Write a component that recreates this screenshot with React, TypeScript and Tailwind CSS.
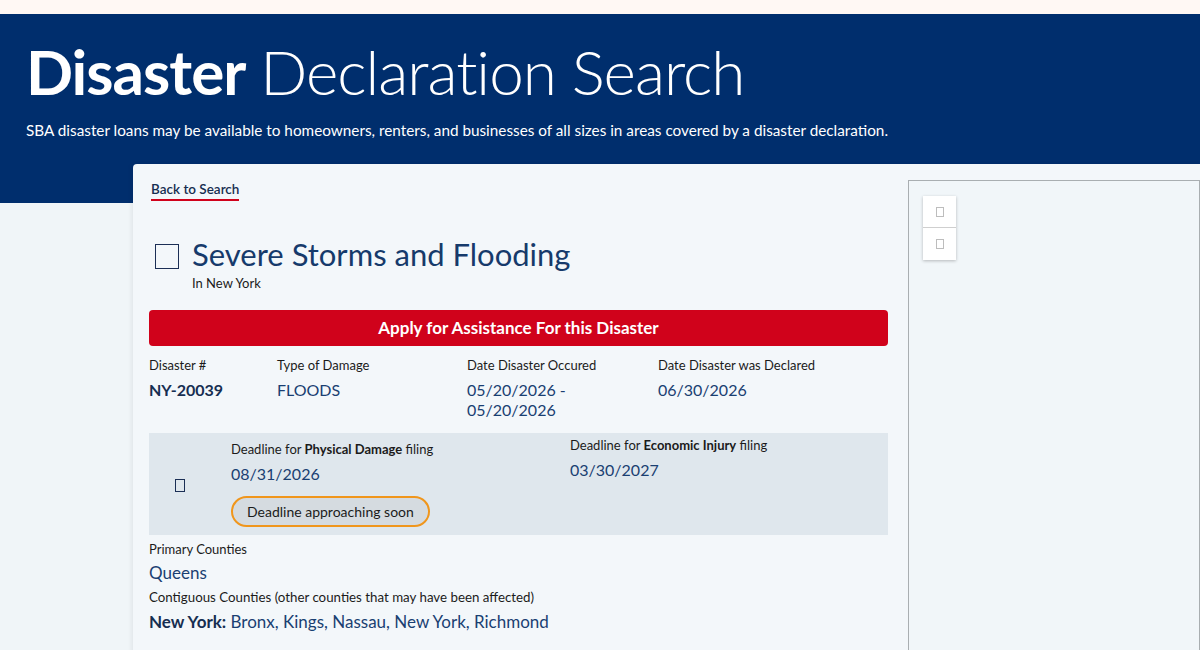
import React from 'react';

const font = { fontFamily: 'Lato, "Noto Sans", sans-serif' };

function Glyph({ className }: { className: string }) {
  // empty box where the icon font glyph would be
  return <span className={`inline-block ${className}`} />;
}

function DetailItem({ label, value, bold }: { label: string; value: React.ReactNode; bold?: boolean }) {
  return (
    <div className="flex flex-col">
      <span className="text-[13px] leading-[18px] text-[#1b1b1b]">{label}</span>
      <span className={`mt-[6px] text-[16px] leading-[20px] text-[#1a3f72] ${bold ? 'font-bold text-[#162e51]' : ''}`}>
        {value}
      </span>
    </div>
  );
}

export default function App() {
  return (
    <div className="min-h-screen w-[1200px] overflow-hidden bg-[#f0f5f8]" style={font}>
      {/* Site banner strip */}
      <div className="h-[14px] bg-[#fff8f4]" />

      {/* Page hero */}
      <div className="h-[189px] bg-[#002e6d] px-[26px] pt-[22px] text-white">
        <h1 className="text-[62px] leading-[70px] tracking-[-1px]">
          <span className="font-bold">Disaster</span> <span className="font-light">Declaration Search</span>
        </h1>
        <p className="mt-[14px] text-[15.3px] leading-[20px]">
          SBA disaster loans may be available to homeowners, renters, and businesses of all sizes in areas covered by a disaster declaration.
        </p>
      </div>

      {/* Detail card */}
      <div className="-mt-[39px] ml-[133px] flex h-[520px] gap-[20px] rounded-tl-[4px] bg-[#f3f7fa] pl-[16px] pt-[12px] shadow-[-2px_0_4px_rgba(0,0,0,0.06)]">
        <div className="flex w-[739px] shrink-0 flex-col">
          <div>
            <a className="ml-[2px] inline-block border-b-2 border-[#d0021b] pb-px text-[13.5px] font-semibold leading-[17px] text-[#162e51]">
              Back to Search
            </a>
          </div>

          <div className="mt-[35px] flex items-start gap-[13px] pl-[6px]">
            <Glyph className="mt-[8px] h-[25px] w-[24px] border-[1.5px] border-[#1b2f55]" />
            <div className="flex flex-col">
              <h2 className="text-[31px] leading-[36px] text-[#163a6b]">Severe Storms and Flooding</h2>
              <span className="mt-[3px] text-[13px] leading-[16px] text-[#1b1b1b]">In New York</span>
            </div>
          </div>

          <button className="mt-[19px] h-[36px] w-full rounded-[4px] bg-[#d0021b] text-[17px] font-bold text-white">
            Apply for Assistance For this Disaster
          </button>

          <div className="mt-[10px] grid grid-cols-[128px_190px_191px_1fr]">
            <DetailItem label="Disaster #" value="NY-20039" bold />
            <DetailItem label="Type of Damage" value="FLOODS" />
            <DetailItem
              label="Date Disaster Occured"
              value={
                <>
                  05/20/2026 -<br />
                  05/20/2026
                </>
              }
            />
            <DetailItem label="Date Disaster was Declared" value="06/30/2026" />
          </div>

          {/* Filing deadlines */}
          <div className="mt-[13px] flex h-[102px] bg-[#dfe7ed]">
            <div className="flex w-[82px] items-center pl-[26px]">
              <Glyph className="mt-[2px] h-[13px] w-[10px] border border-[#1b2f55]" />
            </div>
            <div className="w-[339px] pt-[7px]">
              <div className="text-[13px] leading-[18px] text-[#1b1b1b]">
                Deadline for <b className="font-bold">Physical Damage</b> filing
              </div>
              <div className="mt-[6px] text-[16px] leading-[20px] text-[#1a3f72]">08/31/2026</div>
              <div className="mt-[12px] inline-flex h-[31px] items-center rounded-full border-2 border-[#f0961c] bg-[#d5dbe0] px-[14px] text-[14px] text-[#1b1b1b]">
                Deadline approaching soon
              </div>
            </div>
            <div className="pt-[3px]">
              <div className="text-[13px] leading-[18px] text-[#1b1b1b]">
                Deadline for <b className="font-bold">Economic Injury</b> filing
              </div>
              <div className="mt-[6px] text-[16px] leading-[20px] text-[#1a3f72]">03/30/2027</div>
            </div>
          </div>

          <div className="mt-[5px] text-[13px] leading-[18px] text-[#1b1b1b]">Primary Counties</div>
          <div className="mt-[4px] text-[17px] leading-[22px] text-[#1a3f72]">Queens</div>
          <div className="mt-[4px] text-[13.3px] leading-[18px] text-[#1b1b1b]">
            Contiguous Counties (other counties that may have been affected)
          </div>
          <div className="mt-[5px] text-[17px] leading-[22px] text-[#1a3f72]">
            <b className="font-bold text-[#162e51]">New York:</b> Bronx, Kings, Nassau, New York, Richmond
          </div>
        </div>

        {/* Map panel */}
        <div className="relative mt-[4px] flex-1 border border-[#a9aeb1] bg-[#f1f6f9]">
          <div className="absolute left-[14px] top-[15px] flex w-[33px] flex-col bg-white shadow-[0_1px_3px_rgba(0,0,0,0.25)]">
            <div className="flex h-[32px] items-center justify-center border-b border-[#cfcfcf]">
              <Glyph className="h-[10px] w-[8px] border border-[#bdbdbd]" />
            </div>
            <div className="flex h-[32px] items-center justify-center">
              <Glyph className="h-[10px] w-[8px] border border-[#bdbdbd]" />
            </div>
          </div>
        </div>
      </div>
    </div>
  );
}
